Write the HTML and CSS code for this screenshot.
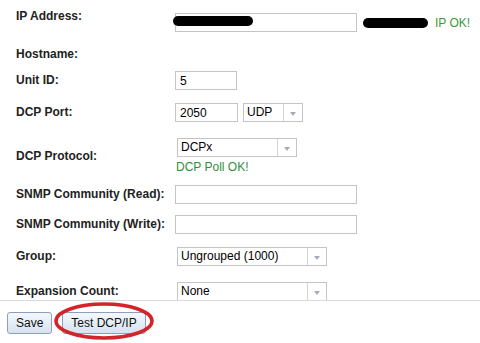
FILE: index.html
```html
<!DOCTYPE html>
<html lang="en">
<head>
    <meta charset="UTF-8">
    <title>Unit Settings</title>
    <link rel="stylesheet" href="styles.css">
</head>
<body>
    <div class="panel">
        <div class="form">
            <div class="row">
                <label class="label label-top">IP Address:</label>
                <div class="field">
                    <span class="input-wrap">
                        <input class="text wide" type="text" value="">
                        <span class="redact redact-over"></span>
                    </span>
                    <span class="redact redact-inline"></span>
                    <span class="ok">IP OK!</span>
                </div>
            </div>

            <div class="row row-empty mt-12">
                <label class="label">Hostname:</label>
            </div>

            <div class="row mt-7">
                <label class="label">Unit ID:</label>
                <div class="field">
                    <input class="text short" type="text" value="5">
                </div>
            </div>

            <div class="row">
                <label class="label">DCP Port:</label>
                <div class="field">
                    <input class="text short port" type="text" value="2050">
                    <div class="select udp">
                        <span class="value">UDP</span>
                        <span class="arrow"></span>
                    </div>
                </div>
            </div>

            <div class="row mt-16">
                <label class="label">DCP Protocol:</label>
                <div class="field stack">
                    <div class="select proto">
                        <span class="value">DCPx</span>
                        <span class="arrow"></span>
                    </div>
                    <span class="ok poll">DCP Poll OK!</span>
                </div>
            </div>

            <div class="row mt-11">
                <label class="label">SNMP Community (Read):</label>
                <div class="field">
                    <input class="text wide" type="text" value="">
                </div>
            </div>

            <div class="row mt-11">
                <label class="label">SNMP Community (Write):</label>
                <div class="field">
                    <input class="text wide" type="text" value="">
                </div>
            </div>

            <div class="row">
                <label class="label">Group:</label>
                <div class="field">
                    <div class="select group">
                        <span class="value">Ungrouped (1000)</span>
                        <span class="arrow"></span>
                    </div>
                </div>
            </div>

            <div class="row mt-16">
                <label class="label">Expansion Count:</label>
                <div class="field">
                    <div class="select group">
                        <span class="value">None</span>
                        <span class="arrow"></span>
                    </div>
                </div>
            </div>
        </div>

        <div class="footer">
            <button class="btn">Save</button>
            <button class="btn">Test DCP/IP</button>
            <svg class="circle" width="104" height="42" viewBox="0 0 104 42">
                <ellipse cx="52" cy="20" rx="48" ry="17" fill="none" stroke="#d3232b" stroke-width="3.5"/>
            </svg>
        </div>
    </div>
</body>
</html>
```

FILE: styles.css
```css
* {
    box-sizing: border-box;
    margin: 0;
    padding: 0;
    font-family: 'Liberation Sans', Arial, sans-serif;
}

body {
    background: #fff;
    width: 480px;
    height: 343px;
    overflow: hidden;
}

.panel {
    display: flex;
    flex-direction: column;
    height: 343px;
}

.form {
    height: 300px;
    overflow: hidden;
    padding: 13px 0 0 16px;
}

.row {
    display: flex;
    align-items: center;
    margin-top: 13px;
}

.row:first-child {
    margin-top: 0;
}

.mt-7 { margin-top: 7px; }
.mt-11 { margin-top: 11px; }
.mt-12 { margin-top: 12px; }
.mt-16 { margin-top: 16px; }

.row-empty {
    min-height: 20px;
}

.label {
    width: 159px;
    flex-shrink: 0;
    font-size: 12px;
    font-weight: bold;
    line-height: 15px;
    color: #222;
}

.label-top {
    align-self: flex-start;
    margin-top: -4px;
}

.field {
    display: flex;
    align-items: center;
}

.field.stack {
    flex-direction: column;
    align-items: flex-start;
}

.text {
    height: 19px;
    border: 1px solid #c4c4c4;
    padding: 0 4px;
    font-size: 12px;
    color: #000;
    background: #fff;
    outline: none;
}

.text.wide { width: 182px; }
.text.short { width: 62px; }
.text.port { width: 63px; }

.input-wrap {
    position: relative;
    display: flex;
}

.redact {
    display: inline-block;
    height: 10px;
    background: #000;
    border-radius: 5px;
}

.redact-over {
    position: absolute;
    left: -2px;
    top: 3px;
    width: 80px;
}

.redact-inline {
    width: 65px;
    margin: 1px 0 0 6px;
}

.ok {
    font-size: 12px;
    color: #3a9a3a;
    margin-left: 7px;
    line-height: 14px;
}

.ok.poll {
    margin: 3px 0 0 1px;
    color: #2f8f3a;
}

.select {
    display: flex;
    height: 19px;
    border: 1px solid #c4c4c4;
    background: #fff;
    margin-left: 2px;
}

.select .value {
    flex: 1;
    font-size: 12px;
    line-height: 17px;
    padding-left: 3px;
    color: #000;
}

.select .arrow {
    width: 19px;
    border-left: 1px solid #d4d4d4;
    display: flex;
    align-items: center;
    justify-content: center;
}

.select .arrow::after {
    content: '';
    border-left: 3.5px solid transparent;
    border-right: 3.5px solid transparent;
    border-top: 4px solid #a3abbb;
    margin-top: 2px;
}

.select.udp {
    width: 60px;
    margin-left: 5px;
}

.select.proto { width: 120px; }
.select.group { width: 150px; }

.footer {
    position: relative;
    flex: 1;
    display: flex;
    gap: 10px;
    align-items: flex-start;
    border-top: 1px solid #dadada;
    padding: 11px 7px 0;
}

.btn {
    height: 22px;
    padding: 0 8px;
    border: 1px solid #8ea0b9;
    border-radius: 3px;
    background: linear-gradient(#f4f8fc, #d6e2f0);
    font-size: 12px;
    color: #111;
}

.circle {
    position: absolute;
    left: 52px;
    top: 0;
}
```
